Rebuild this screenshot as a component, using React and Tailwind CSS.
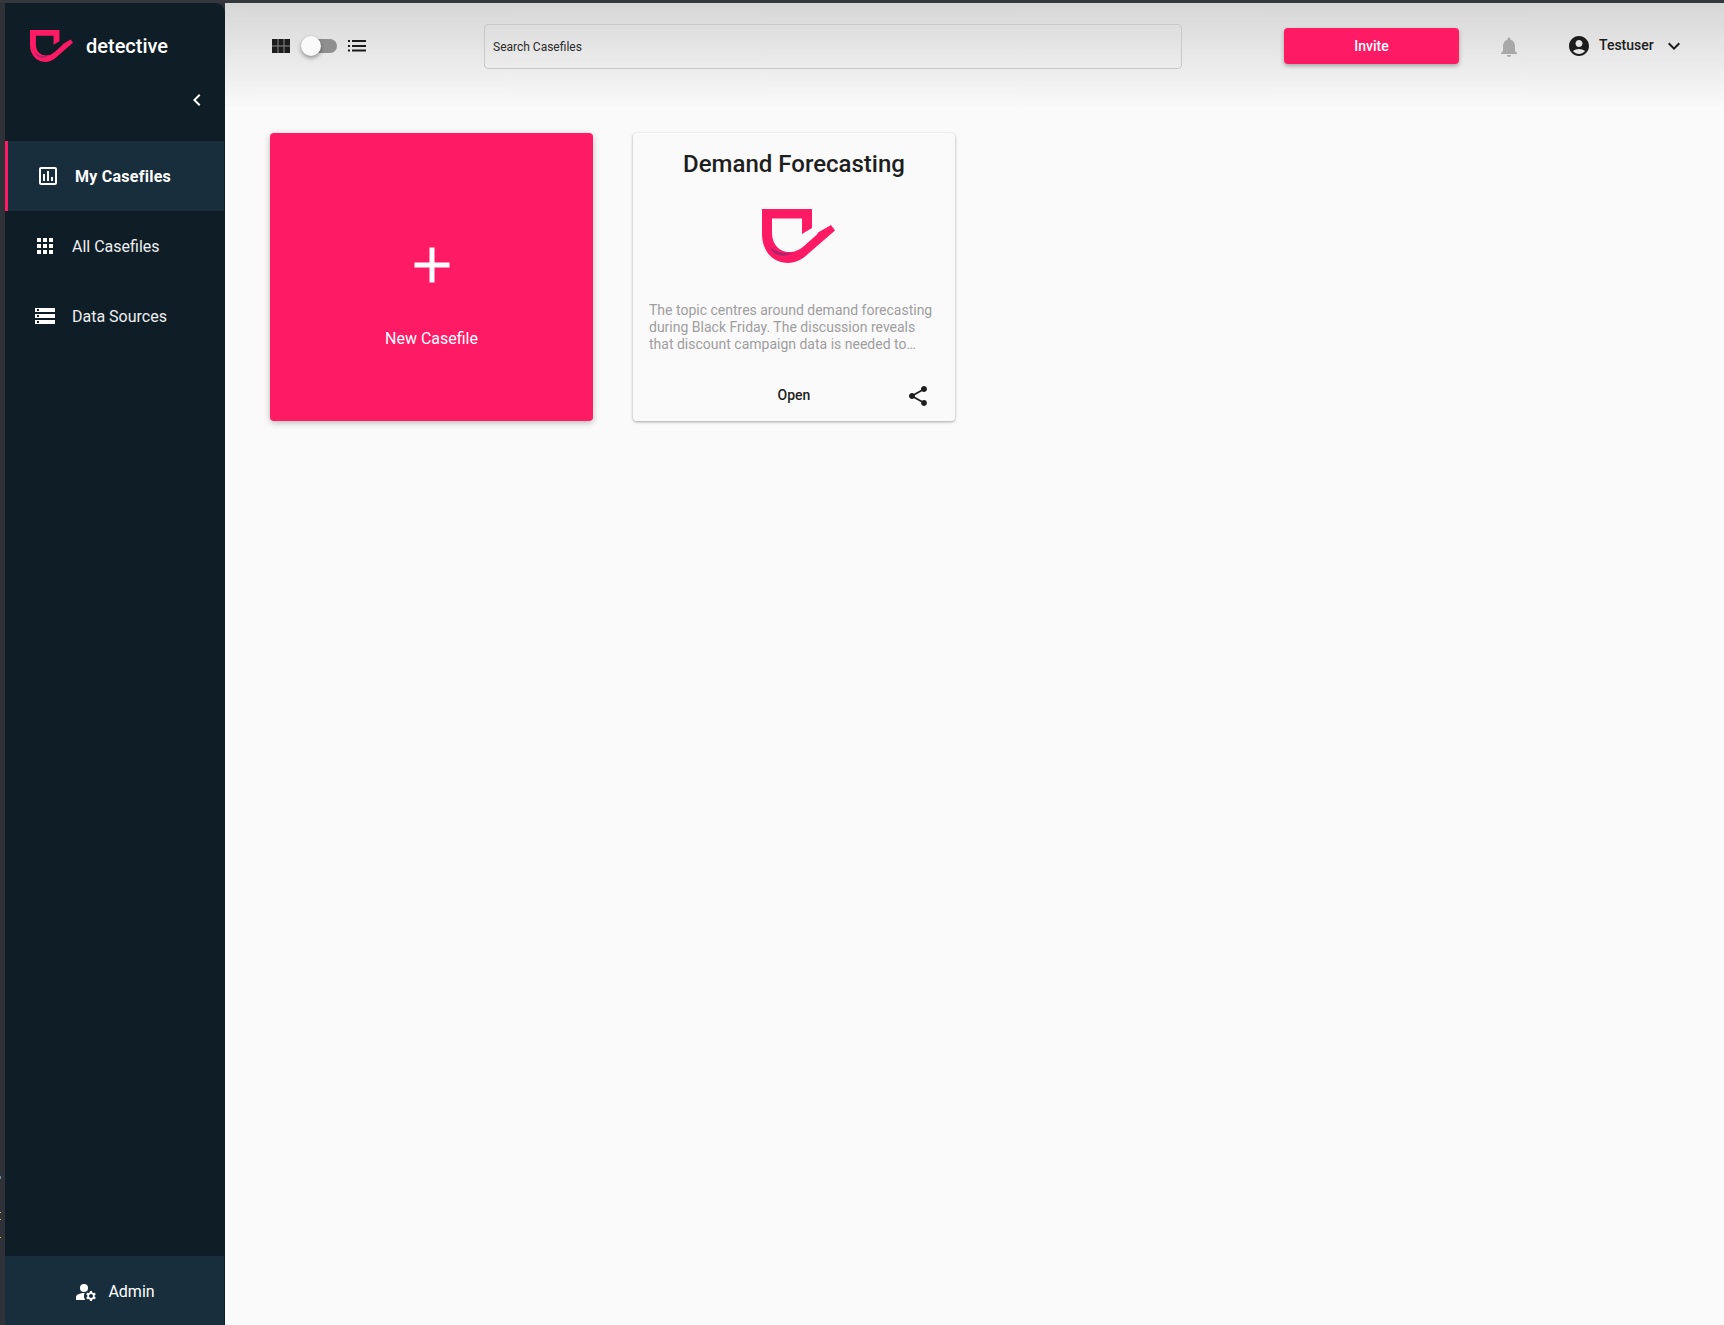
import React from "react";
import { MdOutlineAssessment, MdApps, MdStorage, MdNotifications, MdAccountCircle, MdKeyboardArrowDown, MdShare, MdChevronLeft, MdManageAccounts, MdAdd } from "react-icons/md";

function Logo({ className }) {
  return (
    <svg viewBox="0 0 73 54" className={className} aria-hidden="true">
      <path
        d="M0 0H50V19L40 25V9.500H10V24C10 36 18 43 27 43C33 43 37 41 42 37L55 25.500L56 23.500L69 16L73 21.500L47 44C41 50 34 54 26 54C10 54 0 41 0 25Z"
        fill="#ff1a66"
      />
      <path d="M6 35C10 41 18 45 30 44C25 48 15 48 10 42Z" fill="#8a2a70" opacity="0.7" />
    </svg>
  );
}

function GridIcon() {
  return (
    <svg viewBox="0 0 18 14" className="h-[14px] w-[18px]" aria-hidden="true">
      <rect width="18" height="14" fill="#1c1c1c" />
      <path d="M6 0V14M12 0V14M0 7H18" stroke="#8a8a8a" strokeWidth="1" />
    </svg>
  );
}

function ListIcon() {
  return (
    <svg viewBox="0 0 18 14" className="h-[14px] w-[18px]" aria-hidden="true" fill="#1c1c1c">
      <rect x="0" y="1" width="2" height="2" />
      <rect x="0" y="6" width="2" height="2" />
      <rect x="0" y="10.500" width="2" height="2" />
      <rect x="4" y="1" width="14" height="2" />
      <rect x="4" y="6" width="14" height="2" />
      <rect x="4" y="10.500" width="14" height="2" />
    </svg>
  );
}

function NavItem({ icon, label, active, iconBox, textClass }) {
  return (
    <div className={`mr-[1px] flex h-[70px] items-center ${active ? "border-l-[3px] border-[#ff1a66] bg-[#182e3d] pl-[28px]" : "pl-[28px]"}`}>
      <span className={`flex items-center justify-center ${iconBox}`}>{icon}</span>
      <span className={textClass}>{label}</span>
    </div>
  );
}

export default function App() {
  return (
    <div className="relative flex h-[1325px] w-[1724px] flex-col overflow-hidden bg-[#2e3138] font-['Roboto',sans-serif]">
      <div className="h-[3px] shrink-0 bg-[#35373d]" />
      <span className="absolute left-0 top-[1176px] h-[3px] w-[1px] bg-[#6f86a8]" />
      <span className="absolute left-0 top-[1212px] h-[1px] w-[1px] bg-[#e0c040]" />
      <span className="absolute left-0 top-[1219px] h-[1px] w-[1px] bg-[#e0c040]" />
      <span className="absolute left-0 top-[1237px] h-[1px] w-[1px] bg-[#e0c040]" />
      <div className="flex min-h-0 flex-1 pl-[5px]">
        <aside className="flex w-[220px] shrink-0 flex-col rounded-tr-[10px] bg-[#0f1d26] text-white">
          <div className="flex h-[56px] shrink-0 items-center pl-[25px] pt-[29px]">
            <Logo className="h-[32px] w-[43px]" />
            <span className="ml-[13px] text-[20px] font-medium leading-none">detective</span>
          </div>
          <div className="flex h-[82px] shrink-0 items-center justify-end pr-[16px]">
            <MdChevronLeft className="text-[24px]" />
          </div>
          <nav className="flex flex-1 flex-col">
            <NavItem
              active
              icon={<MdOutlineAssessment className="text-[24px]" />}
              iconBox="w-[24px] mr-[15px]"
              label="My Casefiles"
              textClass="text-[16px] font-bold tracking-[0.25px] pt-[1px]"
            />
            <NavItem
              icon={<MdApps className="text-[24px]" />}
              iconBox="w-[24px] mr-[15px]"
              label="All Casefiles"
              textClass="text-[16px] text-[#eceff1] pt-[1px]"
            />
            <NavItem
              icon={<MdStorage className="text-[24px]" />}
              iconBox="w-[24px] mr-[15px]"
              label="Data Sources"
              textClass="text-[16px] text-[#eceff1] pt-[1px]"
            />
          </nav>
          <div className="mr-[1px] flex h-[69px] shrink-0 items-center justify-center gap-[10px] bg-[#182e3d] pt-[2px]">
            <MdManageAccounts className="text-[24px]" />
            <span className="text-[16px]">Admin</span>
          </div>
        </aside>

        <main className="relative flex min-w-0 flex-1 flex-col bg-[#fafafa]">
          <header className="flex h-[105px] shrink-0 items-start bg-gradient-to-b from-[#d6d6d6] to-[#fafafa] pt-[21px]">
            <div className="ml-[47px] flex h-[44px] w-[95px] items-center text-[#1c1c1c]">
              <GridIcon />
              <div className="relative ml-[13px] h-[14px] w-[34px] rounded-full bg-[#8f8f8f]">
                <span className="absolute -left-[2px] -top-[3px] h-[20px] w-[20px] rounded-full bg-[#fafafa] shadow-[0_2px_4px_rgba(0,0,0,0.4)]" />
              </div>
              <span className="ml-[11px] flex"><ListIcon /></span>
            </div>
            <div className="ml-[117px] flex h-[45px] w-[698px] items-center rounded-[4px] border border-[#c8c8c8] pl-[8px] text-[12px] text-[#2b2b2b]">
              Search Casefiles
            </div>
            <button className="ml-[102px] mt-[4px] flex h-[36px] w-[175px] items-center justify-center rounded-[4px] bg-[#ff1a66] text-[14px] font-medium text-white shadow-[0_2px_4px_rgba(0,0,0,0.3)]">
              Invite
            </button>
            <div className="ml-[38px] flex h-[45px] items-center">
              <MdNotifications className="text-[24px] text-[#a8a8a8]" />
            </div>
            <div className="ml-[46px] flex h-[44px] items-center text-[#1c1c1c]">
              <MdAccountCircle className="text-[24px]" />
              <span className="ml-[8px] -mt-[1px] text-[14px] font-medium">Testuser</span>
              <MdKeyboardArrowDown className="ml-[8px] text-[24px]" />
            </div>
          </header>

          <section className="flex gap-[40px] pl-[45px] pt-[25px]">
            <div className="flex h-[288px] w-[323px] flex-col items-center rounded-[4px] bg-[#ff1a66] text-white shadow-[0_2px_6px_rgba(0,0,0,0.25)]">
              <MdAdd className="mt-[102px] text-[60px]" />
              <span className="mt-[32px] text-[16px]">New Casefile</span>
            </div>
            <div className="flex h-[288px] w-[322px] flex-col items-center rounded-[4px] bg-[#fafafa] shadow-[0_1px_3px_rgba(0,0,0,0.35)]">
              <h2 className="mt-[15px] text-[24px] font-medium leading-[32px] text-[#1e1e1e]">Demand Forecasting</h2>
              <Logo className="ml-[8px] mt-[29px] h-[54px] w-[73px]" />
              <p className="mt-[39px] w-[290px] text-[14px] leading-[17px] text-[#9e9e9e]">
                The topic centres around demand forecasting during Black Friday. The discussion reveals that discount campaign data is needed to…
              </p>
              <div className="relative mt-[30px] flex h-[24px] w-full items-center justify-center">
                <span className="text-[14px] font-medium text-[#1e1e1e]">Open</span>
                <MdShare className="absolute right-[25px] top-[1px] text-[24px] text-[#1e1e1e]" />
              </div>
            </div>
          </section>
        </main>
      </div>
    </div>
  );
}
